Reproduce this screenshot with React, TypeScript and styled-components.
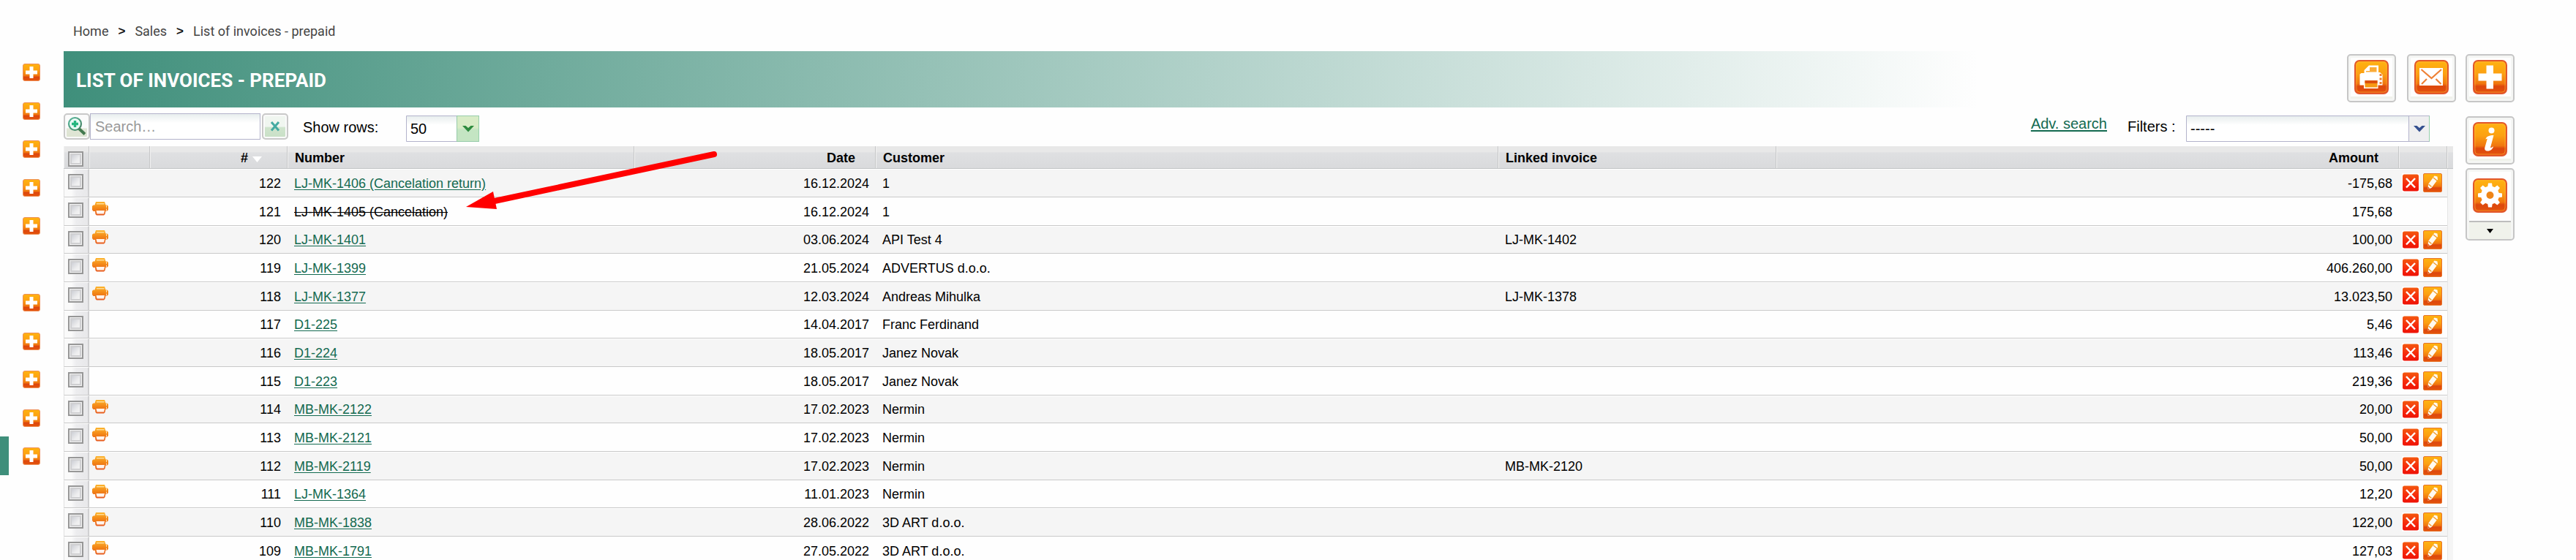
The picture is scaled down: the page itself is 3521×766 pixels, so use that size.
import React from "react";
import styled, { createGlobalStyle } from "styled-components";

const sans = `"Liberation Sans", Arial, sans-serif`;
const green = "#3f8f7b";
const link = "#136a50";

const GlobalStyle = createGlobalStyle`
  *, *::before, *::after { box-sizing: border-box; }
  body { margin: 0; background: #fefefe; font-family: ${sans}; font-size: 18px; color: #000; }
  button { padding: 0; cursor: pointer; }
  svg { display: block; }
`;

const Page = styled.div`
  display: flex;
  height: 100vh;
  overflow: hidden;
`;

const Sidebar = styled.nav`
  flex: none;
  width: 87px;
  padding-top: 72px;
`;

const SideItem = styled.div<{ $active?: boolean }>`
  height: 53px;
  padding: 15px 0 0 19px;
  border-left: 12px solid ${(p) => (p.$active ? green : "transparent")};
  &:nth-child(even) { height: 52px; }
`;

const PlainButton = styled.button`
  display: block;
  border: 0;
  background: none;
`;

const Main = styled.main`
  position: relative;
  flex: 1;
  min-width: 0;
`;

const Breadcrumb = styled.nav`
  display: flex;
  align-items: center;
  gap: 13px;
  height: 70px;
  padding: 16px 13px 0;
  font-family: Roboto, sans-serif;
  font-size: 18px;
  line-height: 22px;
  color: #444;
  a { color: inherit; text-decoration: none; }
`;

const Separator = styled.span`
  font-family: ${sans};
  font-weight: bold;
  font-size: 17px;
  color: #111;
`;

const Banner = styled.header`
  display: flex;
  align-items: flex-start;
  gap: 15px;
  height: 77px;
  padding: 4px 0 0 17px;
  background: linear-gradient(to right, ${green}, #fefefe 80%);
`;

const Title = styled.h1`
  flex: 1;
  margin: 0;
  font-family: Roboto, sans-serif;
  font-size: 26px;
  line-height: 72px;
  font-weight: 700;
  color: #fff;
`;

const Tool = styled.button<{ $tall?: boolean }>`
  display: flex;
  flex: none;
  flex-direction: column;
  align-items: center;
  width: 67px;
  height: ${(p) => (p.$tall ? 99 : 66)}px;
  padding-top: ${(p) => (p.$tall ? 12 : 6)}px;
  border: 2px solid #c6c6c6;
  border-radius: 5px;
  background: #fefefe;
  box-shadow: inset 0 0 0 3px #f5f6f4, inset 0 -6px 0 #f0f2eb;
`;

const ToolMore = styled.span`
  display: flex;
  justify-content: center;
  width: 57px;
  height: 25px;
  margin-top: 11px;
  padding-top: 9px;
  border-top: 2px solid #bdbdbd;
  background: #f0f2eb;
`;

const Toolbar = styled.div`
  display: flex;
  height: 53px;
  padding: 8px 36px 0 0;
  font-size: 20px;
  line-height: 24px;
`;

const SquareButton = styled.button<{ $tint?: boolean }>`
  display: flex;
  align-items: center;
  justify-content: center;
  width: 36px;
  height: 36px;
  border: 2px solid #c9c9c9;
  border-radius: 5px;
  background: ${(p) =>
    p.$tint
      ? "linear-gradient(#f0f6f0 50%, #cfe4cd 55%, #c9e0c6)"
      : "linear-gradient(#fbfbfb 55%, #e0e6d6 60%, #dde4d2)"};
  box-shadow: inset 0 0 0 2px #fafafa;
`;

const SearchInput = styled.input`
  width: 233px;
  height: 36px;
  margin-right: 2px;
  padding: 0 6px;
  border: 1px solid #b3b3cb;
  border-radius: 0;
  background: linear-gradient(#e8eeee, #fff 12px);
  font: 20px ${sans};
  &::placeholder { color: #999; opacity: 1; }
`;

const RowsLabel = styled.label`
  width: 141px;
  margin-left: 20px;
  padding-top: 7px;
`;

const SelectBox = styled.div<{ $green?: boolean }>`
  position: relative;
  width: ${(p) => (p.$green ? 100 : 333)}px;
  height: 36px;
  margin-top: 3px;
`;

const Select = styled.select`
  appearance: none;
  width: 100%;
  height: 36px;
  padding: 0 6px 0 5px;
  border: 1px solid #b3b3cb;
  border-radius: 0 4px 4px 0;
  background: linear-gradient(#e8eeee, #fff 12px);
  color: #000;
  font: 20px ${sans};
`;

const Chevron = styled.span<{ $green?: boolean }>`
  position: absolute;
  top: 0;
  right: 0;
  display: flex;
  align-items: center;
  justify-content: center;
  width: ${(p) => (p.$green ? 31 : 29)}px;
  height: 36px;
  border: 1px solid ${(p) => (p.$green ? "#97cbaa" : "#b3b3cb")};
  border-right-color: #97d1ab;
  background: ${(p) => (p.$green ? "linear-gradient(#d8ecc6 45%, #c4e5c3 55%)" : "#efeff0")};
  pointer-events: none;
`;

const FilterGroup = styled.div`
  display: flex;
  margin-left: auto;
`;

const AdvancedLink = styled.a`
  height: 26px;
  margin-right: 28px;
  padding-top: 2px;
  color: ${link};
  text-decoration: underline;
  text-decoration-thickness: 2px;
  text-underline-offset: 2px;
`;

const FilterLabel = styled.label`
  width: 80px;
  padding-top: 6px;
`;

const Table = styled.table`
  width: calc(100% - 4px);
  table-layout: fixed;
  border-collapse: separate;
  border-spacing: 0;
  line-height: 22px;
`;

const HeadCell = styled.th<{ $right?: boolean; $inset?: number }>`
  height: 31px;
  padding: 2px ${(p) => p.$inset ?? 9}px 0 10px;
  border-right: 1px solid #c6c7c8;
  border-bottom: 1px solid #c3c5c7;
  background: linear-gradient(#e8e8e8 25%, #dfe0e2 30%, #d9dadc);
  box-shadow: inset 1px 0 0 #f1f1f1;
  text-align: ${(p) => (p.$right ? "right" : "left")};
  font-weight: bold;
  white-space: nowrap;
  &:last-child { border-right: 0; }
`;

const SortMark = styled.svg`
  display: inline-block;
  margin-left: 6px;
`;

const Row = styled.tr`
  height: 39px;
  background: #fefefe;
  &:nth-child(odd) { background: #f5f5f5; }
  &:nth-child(3n) { height: 38px; }
`;

const Cell = styled.td<{ $right?: boolean }>`
  padding: 0 ${(p) => (p.$right ? 9 : 0)}px 0 ${(p) => (p.$right ? 0 : 9)}px;
  border-top: 1px solid #fff;
  border-bottom: 1px solid #c9c9c9;
  text-align: ${(p) => (p.$right ? "right" : "left")};
  white-space: nowrap;
  a { color: ${link}; text-underline-offset: 2px; }
`;

const CheckCell = styled.td`
  padding: 6px 0 0 5px;
  border-top: 1px solid #fff;
  border-left: 1px solid #e0e0e0;
  border-right: 2px solid #d0d0d2;
  border-bottom: 1px solid #c9c9c9;
  background: linear-gradient(to right, #fafafa 30%, #ededef 50%, #e8e8ea);
  vertical-align: top;
`;

const CheckHead = styled(HeadCell)`
  padding: 7px 0 0 6px;
  vertical-align: top;
`;

const PrintCell = styled(Cell)`
  padding: 5px 0 0 4px;
  vertical-align: top;
`;

const ActionCell = styled(Cell)`
  padding: 5px 0 0 4px;
  vertical-align: top;
`;

const Actions = styled.div`
  display: flex;
  gap: 5px;
`;

const Edge = styled.td`
  background: #f5f5f5;
  border-left: 1px solid #e6e6e6;
`;

const Checkbox = styled.input`
  appearance: none;
  display: block;
  width: 21px;
  height: 21px;
  margin: 0;
  border: 2px solid #979797;
  background: linear-gradient(135deg, #bfc2cb, #eeeeef 60%, #f6f6f6);
  box-shadow: inset 0 0 0 1px #f4f4f4, inset 0 0 0 3px #cfcfd1;
`;

const Crossed = styled.s``;

const ToolColumn = styled.aside`
  display: flex;
  flex: none;
  flex-direction: column;
  gap: 5px;
  width: 67px;
  margin: 74px 84px 0 13px;
  ${Tool}:first-child { margin-bottom: 14px; }
`;

const Pointer = styled.svg`
  position: absolute;
  top: 200px;
  left: 545px;
  pointer-events: none;
`;

const Defs = () => (
  <svg width="0" height="0" style={{ position: "absolute" }} aria-hidden="true">
    <defs>
      <linearGradient id="tile" x1="0" y1="0" x2="0" y2="1">
        <stop offset="0" stopColor="#ffb310" />
        <stop offset="0.4" stopColor="#fca012" />
        <stop offset="0.7" stopColor="#f0760f" />
        <stop offset="0.78" stopColor="#dd470d" />
        <stop offset="1" stopColor="#e4540c" />
      </linearGradient>
      <linearGradient id="remove" x1="0" y1="0" x2="0" y2="1">
        <stop offset="0" stopColor="#f4580f" />
        <stop offset="0.6" stopColor="#f6280c" />
        <stop offset="1" stopColor="#ee1206" />
      </linearGradient>
      <linearGradient id="print" x1="0" y1="0" x2="0" y2="1">
        <stop offset="0" stopColor="#fdb42c" />
        <stop offset="0.5" stopColor="#f28416" />
        <stop offset="1" stopColor="#e65a20" />
      </linearGradient>
      <linearGradient id="lens" x1="0" y1="0" x2="1" y2="1">
        <stop offset="0" stopColor="#58b89c" />
        <stop offset="1" stopColor="#467f60" />
      </linearGradient>
    </defs>
  </svg>
);

const SmallPlus = () => (
  <svg width="24" height="24" viewBox="0 0 24 24" aria-hidden="true">
    <rect x="0.5" y="0.5" width="23" height="23" rx="2.5" fill="url(#tile)" stroke="#ee9058" />
    <path d="M9.500 4h5v5.500H20v5h-5.500V20h-5v-5.500H4v-5h5.500z" fill="#fff" />
  </svg>
);

const Tile = ({ children }: { children: React.ReactNode }) => (
  <svg width="47" height="47" viewBox="0 0 47 47" aria-hidden="true">
    <rect x="1" y="1" width="45" height="45" rx="6" fill="url(#tile)" stroke="#e2572b" strokeWidth="2" />
    <rect x="3" y="3" width="41" height="41" rx="4" fill="none" stroke="#ffb43a" strokeOpacity="0.6" />
    {children}
  </svg>
);

const PrinterTile = () => (
  <Tile>
    <path d="M7.500 19.500l2-1.500h4v-4l6.500-6.500h13V17h2l3.500 3v14.500h-6V39H13v-4.500H7.500z" fill="#fff" />
    <path d="M16 16.500V15h5v-5h9.500v6.500z" fill="#fbac38" />
    <path d="M14.500 28h17v9.500h-17z" fill="#f79a14" />
    <path d="M14.500 28h17v4h-17z" fill="#dc500c" />
    <path d="M34.500 19h3v3h-3zM34.500 24.500h3v3h-3zM34.500 30h3v3h-3z" fill="#f08030" />
  </Tile>
);

const MailTile = () => (
  <Tile>
    <rect x="7" y="11" width="32" height="24" fill="#fff" />
    <path d="M9.500 13l14 12 13.500-12M10 33l7-7M36.500 33l-7-7" fill="none" stroke="#ee8136" strokeWidth="2.200" />
  </Tile>
);

const PlusTile = () => (
  <Tile>
    <path d="M18.500 7.500h9.500v11h11.500v10H28v11h-9.500v-11H7.500v-10h11z" fill="#fff" />
  </Tile>
);

const InfoTile = () => (
  <Tile>
    <circle cx="25.500" cy="11.500" r="4" fill="#fff" />
    <path d="M19 20.500c3-2 6-2.500 9.500-2.500l-4.500 17c1.500 0 2.500-.7 4-1.800-.5 3.500-4 6.300-7.500 6.300-3.500 0-5-2-4-5.300l3.300-11.500c-1 0-1.800.3-2.600.9z" fill="#fff" />
  </Tile>
);

const teeth = [0, 45, 90, 135, 180, 225, 270, 315];
const GearTile = () => (
  <Tile>
    <g fill="#fff">
      <circle cx="23.500" cy="23" r="12.500" />
      {teeth.map((a) => (
        <path key={a} d="M20 13l1-6.500h5l1 6.500z" transform={`rotate(${a} 23.500 23)`} />
      ))}
    </g>
    <circle cx="23.500" cy="23" r="5" fill="#ee8517" />
  </Tile>
);

const RowPrinter = () => (
  <svg width="23" height="19" viewBox="0 0 23 19" aria-hidden="true">
    <path d="M5 0h12l1.500 4.500h2L22 6v5l-1.500 1.500h-2L17.500 17l-1.500 1.500H6L4.500 17l-.5-4H1.500L0 11V6l1.500-1.500h2z" fill="url(#print)" />
    <path d="M6 2h10.500v1.500H6z" fill="#ffdc94" />
    <path d="M5.500 12h11.500l-1 4.500H6.500z" fill="#fff4ee" />
    <path d="M19.500 5v3M19.500 9.500v2.500" stroke="#ffdfb8" />
  </svg>
);

const RemoveIcon = () => (
  <svg width="24" height="26" viewBox="0 0 24 26" aria-hidden="true">
    <rect x="0" y="0" width="24" height="26" fill="#fff" />
    <rect x="1" y="1.500" width="22" height="23" rx="2.500" fill="url(#remove)" />
    <path d="M6 7l12 12.500M18 7L6 19.500" stroke="#fff" strokeWidth="2.500" />
  </svg>
);

const EditIcon = () => (
  <svg width="26" height="26" viewBox="0 0 26 26" aria-hidden="true">
    <rect x="0.500" y="0.500" width="25" height="25" rx="1.500" fill="url(#tile)" stroke="#e8742a" />
    <path d="M6.500 22l.5-7L15.500 3.500l4 1 .5 4L11.500 20z" fill="#fffaf0" />
    <path d="M14 6l5 4M7.500 15l4 3.500" stroke="#ef9a2c" strokeWidth="1.500" />
    <path d="M6.500 22l.3-3.500 2.200 2z" fill="#e0560c" />
  </svg>
);

const SearchIcon = () => (
  <svg width="28" height="28" viewBox="0 0 28 28" aria-hidden="true">
    <path d="M17 17l8 7.500" stroke="#43794f" strokeWidth="4" />
    <circle cx="11.500" cy="10.500" r="8.500" fill="#e9faf5" stroke="url(#lens)" strokeWidth="2.200" />
    <path d="M11.500 6v9M7 10.500h9" stroke="#25b67f" strokeWidth="3.400" />
  </svg>
);

const ClearIcon = () => (
  <svg width="14" height="14" viewBox="0 0 14 14" aria-hidden="true">
    <path d="M2 1l10 11.500M12 1L2 12.500" stroke="#45aaa2" strokeWidth="3" />
  </svg>
);

const ChevronIcon = ({ color }: { color: string }) => (
  <svg width="16" height="10" viewBox="0 0 16 10" aria-hidden="true">
    <path d="M0 1h4.500L8 4l3.500-3H16L8 9.500z" fill={color} />
  </svg>
);

type Invoice = {
  id: number;
  number: string;
  date: string;
  customer: string;
  linked?: string;
  amount: string;
  print?: boolean;
  cancelled?: boolean;
};

const invoices: Invoice[] = [
  { id: 122, number: "LJ-MK-1406 (Cancelation return)", date: "16.12.2024", customer: "1", amount: "-175,68" },
  { id: 121, number: "LJ-MK-1405 (Cancelation)", date: "16.12.2024", customer: "1", amount: "175,68", print: true, cancelled: true },
  { id: 120, number: "LJ-MK-1401", date: "03.06.2024", customer: "API Test 4", linked: "LJ-MK-1402", amount: "100,00", print: true },
  { id: 119, number: "LJ-MK-1399", date: "21.05.2024", customer: "ADVERTUS d.o.o.", amount: "406.260,00", print: true },
  { id: 118, number: "LJ-MK-1377", date: "12.03.2024", customer: "Andreas Mihulka", linked: "LJ-MK-1378", amount: "13.023,50", print: true },
  { id: 117, number: "D1-225", date: "14.04.2017", customer: "Franc Ferdinand", amount: "5,46" },
  { id: 116, number: "D1-224", date: "18.05.2017", customer: "Janez Novak", amount: "113,46" },
  { id: 115, number: "D1-223", date: "18.05.2017", customer: "Janez Novak", amount: "219,36" },
  { id: 114, number: "MB-MK-2122", date: "17.02.2023", customer: "Nermin", amount: "20,00", print: true },
  { id: 113, number: "MB-MK-2121", date: "17.02.2023", customer: "Nermin", amount: "50,00", print: true },
  { id: 112, number: "MB-MK-2119", date: "17.02.2023", customer: "Nermin", linked: "MB-MK-2120", amount: "50,00", print: true },
  { id: 111, number: "LJ-MK-1364", date: "11.01.2023", customer: "Nermin", amount: "12,20", print: true },
  { id: 110, number: "MB-MK-1838", date: "28.06.2022", customer: "3D ART d.o.o.", amount: "122,00", print: true },
  { id: 109, number: "MB-MK-1791", date: "27.05.2022", customer: "3D ART d.o.o.", amount: "127,03", print: true },
];

const ACTIVE_ITEM = 10;
const EMPTY_ITEM = 5;

export default function App() {
  return (
    <Page>
      <GlobalStyle />
      <Defs />
      <Sidebar aria-label="Menu">
        {Array.from({ length: 11 }, (_, i) => (
          <SideItem key={i} $active={i === ACTIVE_ITEM}>
            {i !== EMPTY_ITEM && (
              <PlainButton aria-label="Add new">
                <SmallPlus />
              </PlainButton>
            )}
          </SideItem>
        ))}
      </Sidebar>

      <Main>
        <Breadcrumb aria-label="Breadcrumb">
          <a href="#home">Home</a>
          <Separator>&gt;</Separator>
          <a href="#sales">Sales</a>
          <Separator>&gt;</Separator>
          <a href="#list">List of invoices - prepaid</a>
        </Breadcrumb>

        <Banner>
          <Title>LIST OF INVOICES - PREPAID</Title>
          <Tool aria-label="Print"><PrinterTile /></Tool>
          <Tool aria-label="Send by e-mail"><MailTile /></Tool>
        </Banner>

        <Toolbar>
          <SquareButton aria-label="Search"><SearchIcon /></SquareButton>
          <SearchInput type="text" placeholder="Search…" aria-label="Search invoices" />
          <SquareButton $tint aria-label="Clear search"><ClearIcon /></SquareButton>
          <RowsLabel htmlFor="rows">Show rows:</RowsLabel>
          <SelectBox $green>
            <Select id="rows" defaultValue="50">
              <option>50</option>
              <option>100</option>
            </Select>
            <Chevron $green><ChevronIcon color="#2e8b3e" /></Chevron>
          </SelectBox>
          <FilterGroup>
            <AdvancedLink href="#advanced">Adv. search</AdvancedLink>
            <FilterLabel htmlFor="filters">Filters :</FilterLabel>
            <SelectBox>
              <Select id="filters">
                <option>-----</option>
              </Select>
              <Chevron><ChevronIcon color="#34508f" /></Chevron>
            </SelectBox>
          </FilterGroup>
        </Toolbar>

        <Table>
          <colgroup>
            <col width="35" />
            <col width="83" />
            <col width="188" />
            <col width="474" />
            <col width="330" />
            <col />
            <col width="380" />
            <col />
            <col width="66" />
            <col width="8" />
          </colgroup>
          <thead>
            <tr>
              <CheckHead><Checkbox type="checkbox" aria-label="Select all" /></CheckHead>
              <HeadCell />
              <HeadCell $right $inset={34}>
                #
                <SortMark width="13" height="8" viewBox="0 0 13 8" aria-hidden="true">
                  <path d="M0 0h13L6.500 8z" fill="#fff" />
                </SortMark>
              </HeadCell>
              <HeadCell>Number</HeadCell>
              <HeadCell $right $inset={27}>Date</HeadCell>
              <HeadCell>Customer</HeadCell>
              <HeadCell>Linked invoice</HeadCell>
              <HeadCell $right $inset={27}>Amount</HeadCell>
              <HeadCell />
              <HeadCell />
            </tr>
          </thead>
          <tbody>
            {invoices.map((inv) => (
              <Row key={inv.id}>
                <CheckCell>
                  <Checkbox type="checkbox" aria-label={`Select ${inv.number}`} />
                </CheckCell>
                <PrintCell>
                  {inv.print && (
                    <PlainButton aria-label={`Print ${inv.number}`}><RowPrinter /></PlainButton>
                  )}
                </PrintCell>
                <Cell $right>{inv.id}</Cell>
                <Cell>
                  {inv.cancelled ? (
                    <Crossed>{inv.number}</Crossed>
                  ) : (
                    <a href={`#invoice-${inv.id}`}>{inv.number}</a>
                  )}
                </Cell>
                <Cell $right>{inv.date}</Cell>
                <Cell>{inv.customer}</Cell>
                <Cell>{inv.linked}</Cell>
                <Cell $right>{inv.amount}</Cell>
                <ActionCell>
                  {!inv.cancelled && (
                    <Actions>
                      <PlainButton aria-label={`Delete ${inv.number}`}><RemoveIcon /></PlainButton>
                      <PlainButton aria-label={`Edit ${inv.number}`}><EditIcon /></PlainButton>
                    </Actions>
                  )}
                </ActionCell>
                <Edge />
              </Row>
            ))}
          </tbody>
        </Table>

        <Pointer width="360" height="100" viewBox="0 0 360 100" aria-hidden="true">
          <path d="M344 11L44 75" stroke="#f00" strokeWidth="8" strokeLinecap="round" />
          <path d="M5 83L42 62L47 86z" fill="#f00" />
        </Pointer>
      </Main>

      <ToolColumn>
        <Tool aria-label="Add invoice"><PlusTile /></Tool>
        <Tool aria-label="Information"><InfoTile /></Tool>
        <Tool $tall aria-label="Settings">
          <GearTile />
          <ToolMore>
            <svg width="9" height="6" viewBox="0 0 9 6" aria-hidden="true">
              <path d="M0 0h9L4.500 6z" fill="#000" />
            </svg>
          </ToolMore>
        </Tool>
      </ToolColumn>
    </Page>
  );
}
